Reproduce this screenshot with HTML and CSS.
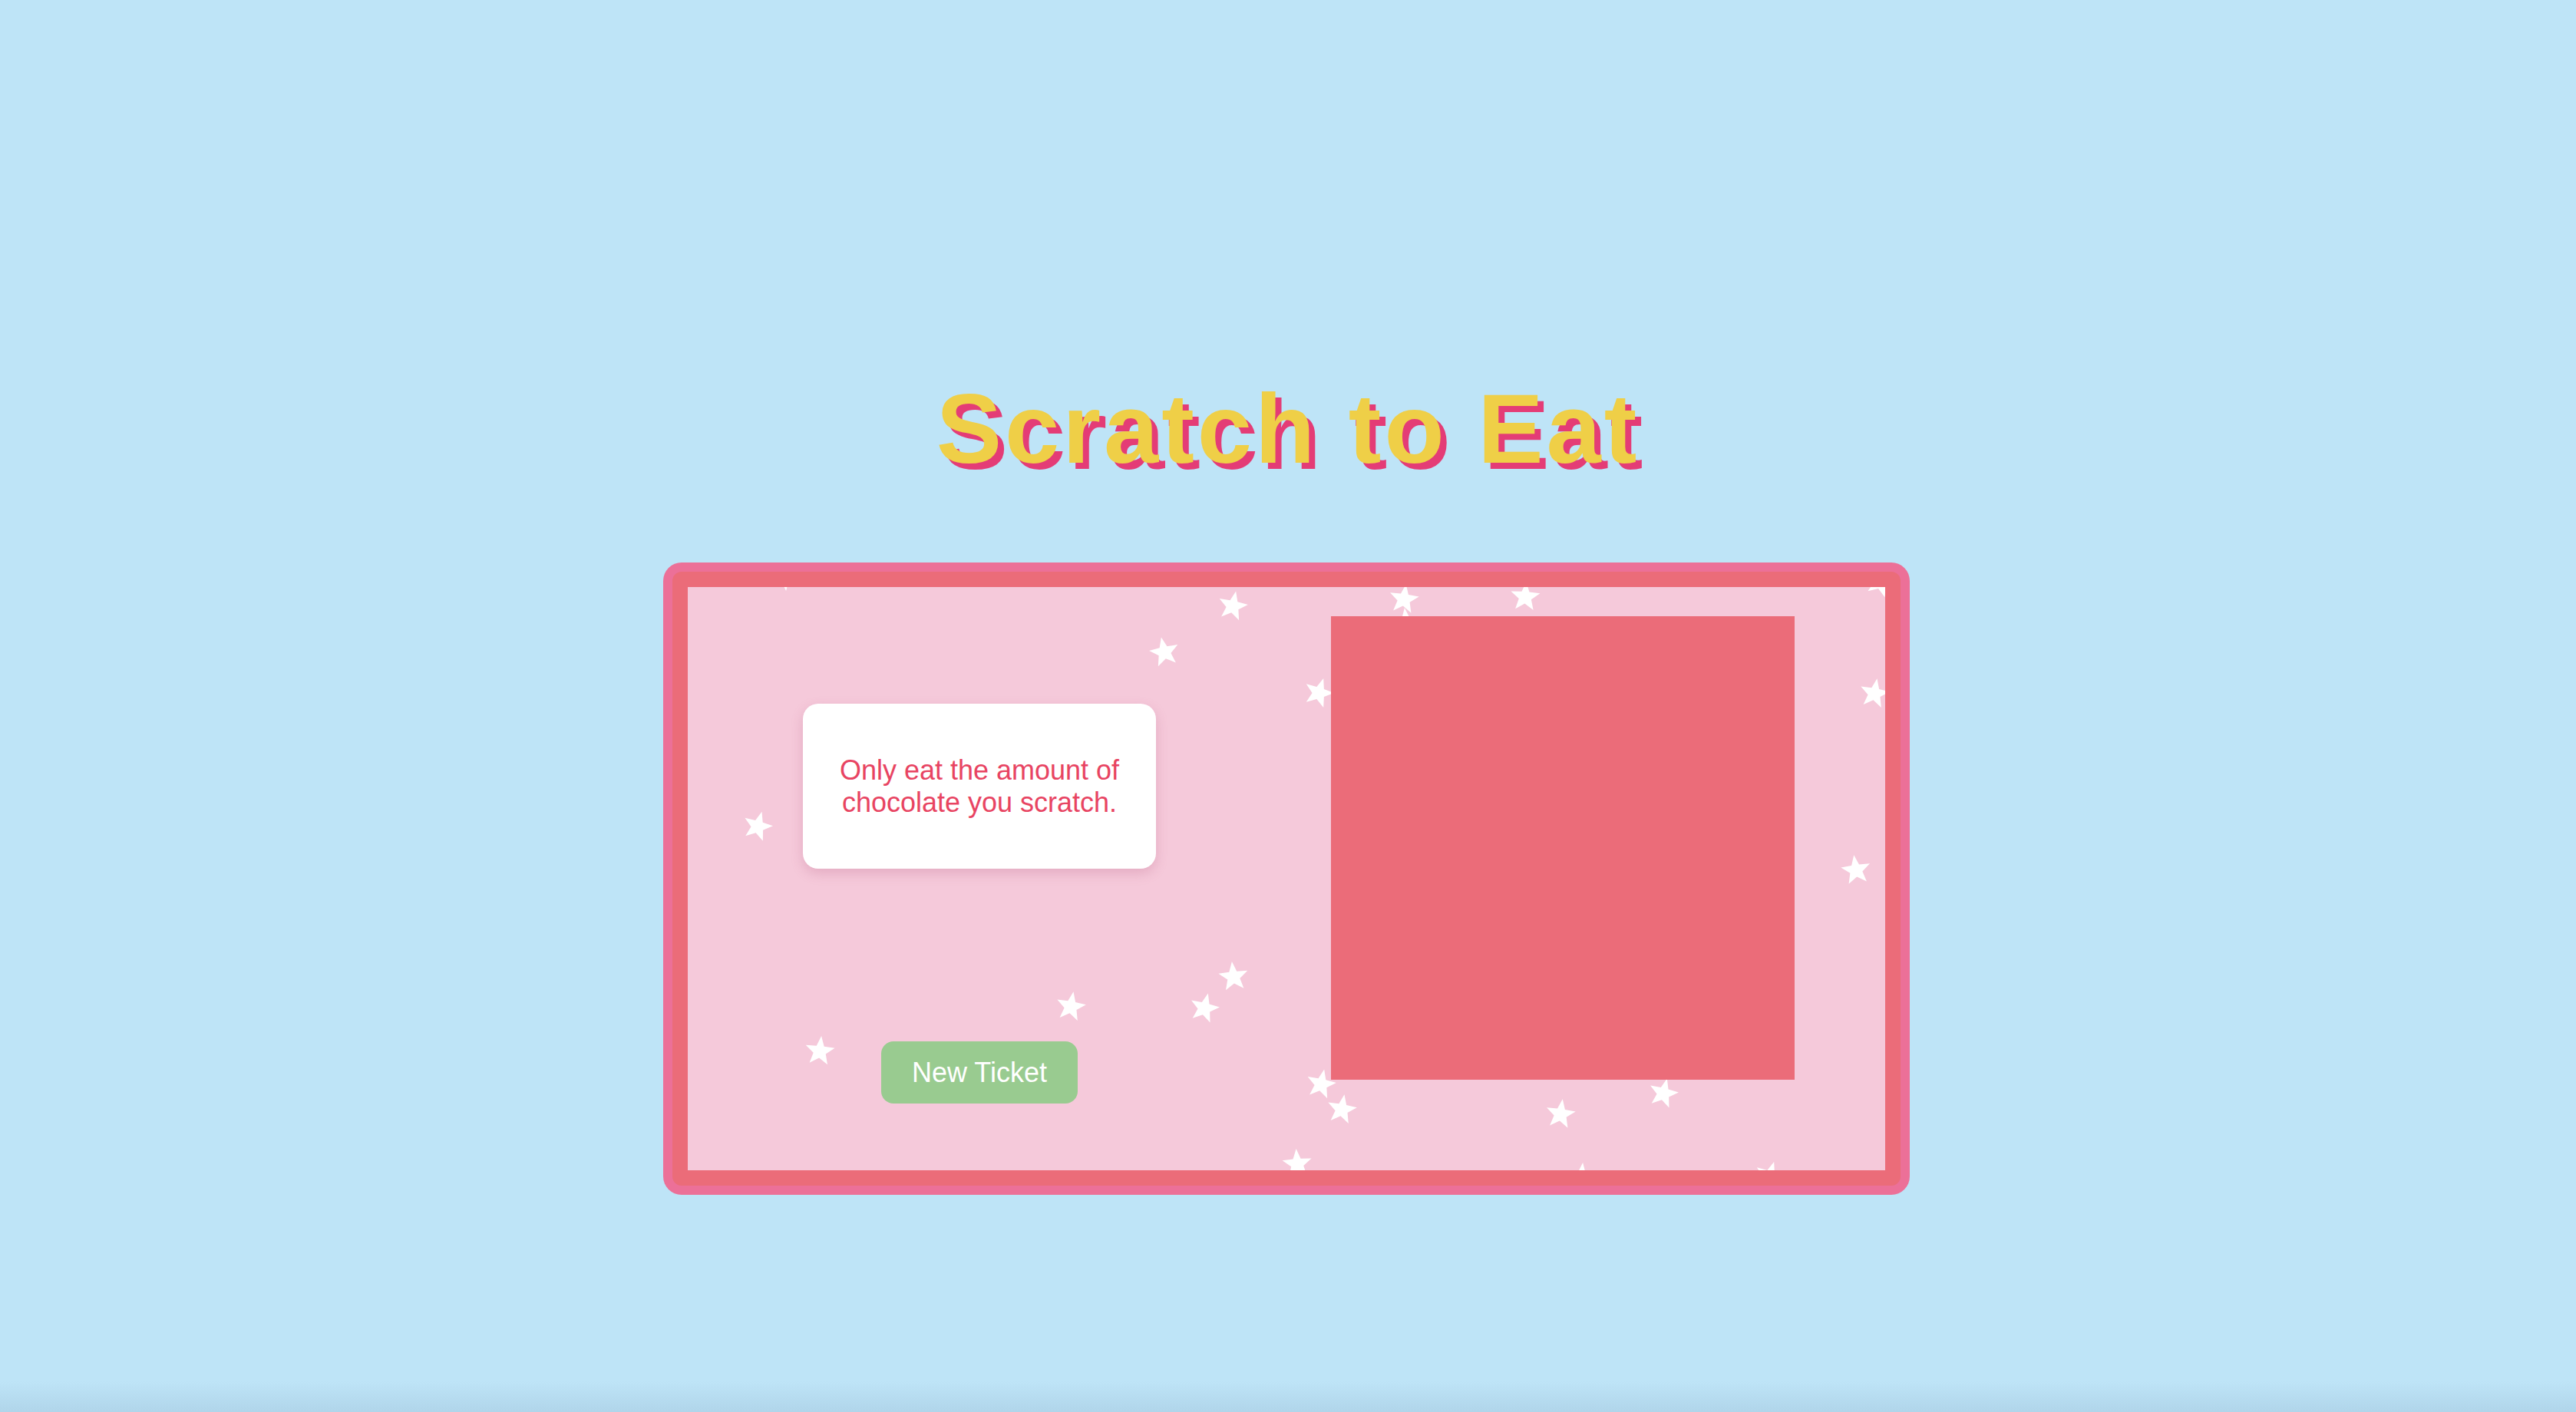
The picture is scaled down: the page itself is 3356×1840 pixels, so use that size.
FILE: index.html
```html
<!DOCTYPE html>
<html lang="en">
<head>
<meta charset="utf-8">
<title>Scratch to Eat</title>
<link rel="stylesheet" href="styles.css">
</head>
<body>
<main class="page">
  <h1 class="title">Scratch to Eat</h1>
  <div class="ticket">
    <div class="ticket-frame">
      <div class="ticket-canvas">
        <svg class="stars" width="1560" height="760" viewBox="0 0 1560 760" aria-hidden="true">
          <defs>
            <polygon id="star" fill="#ffffff" points="0,-20 5,-6.88 19.02,-6.18 8.08,2.63 11.76,16.18 0,8.5 -11.76,16.18 -8.08,2.63 -19.02,-6.18 -5,-6.88"/>
          </defs>
          <use href="#star" transform="translate(126,-15) rotate(30)"/>
          <use href="#star" transform="translate(710,25) rotate(12)"/>
          <use href="#star" transform="translate(621,85) rotate(-12)"/>
          <use href="#star" transform="translate(822,138) rotate(18)"/>
          <use href="#star" transform="translate(933,16) rotate(8)"/>
          <use href="#star" transform="translate(936,47) rotate(-6)"/>
          <use href="#star" transform="translate(1091,13) rotate(4)"/>
          <use href="#star" transform="translate(1554,-6) rotate(20)"/>
          <use href="#star" transform="translate(1546,139) rotate(10)"/>
          <use href="#star" transform="translate(1522,369) rotate(-8)"/>
          <use href="#star" transform="translate(91,312) rotate(16)"/>
          <use href="#star" transform="translate(499,547) rotate(10)"/>
          <use href="#star" transform="translate(711,508) rotate(-6)"/>
          <use href="#star" transform="translate(673,549) rotate(14)"/>
          <use href="#star" transform="translate(172,605) rotate(6)"/>
          <use href="#star" transform="translate(825,648) rotate(12)"/>
          <use href="#star" transform="translate(852,681) rotate(10)"/>
          <use href="#star" transform="translate(1137,687) rotate(8)"/>
          <use href="#star" transform="translate(1271,660) rotate(14)"/>
          <use href="#star" transform="translate(794,752) rotate(-4)"/>
          <use href="#star" transform="translate(1164,770) rotate(6)"/>
          <use href="#star" transform="translate(1409,768) rotate(18)"/>
        </svg>
        <div class="ticket-left">
          <div class="note">
            <p class="note-text">Only eat the amount of<br>chocolate you scratch.</p>
          </div>
          <button class="new-ticket" type="button">New Ticket</button>
        </div>
        <div class="scratch-area"></div>
      </div>
    </div>
  </div>
</main>
</body>
</html>
```

FILE: styles.css
```css
html {
  min-height: 100%;
  background: linear-gradient(to bottom, #bee4f7 0, #bee4f7 calc(100% - 40px), #b0d5ea 100%);
}

body {
  margin: 0;
  min-height: 1840px;
  font-family: "Liberation Sans", Arial, sans-serif;
}

.page {
  display: flex;
  flex-direction: column;
  align-items: center;
  padding-top: 485px;
}

.title {
  margin: 0 0 100px 0;
  font-family: "Liberation Sans", Arial, sans-serif;
  font-weight: 700;
  font-size: 128px;
  line-height: 148px;
  letter-spacing: 4px;
  color: #efcf47;
  text-shadow: 8px 8px 0 #e43c76;
}

.ticket {
  padding: 12px;
  background: #ec7098;
  border-radius: 24px;
  margin-left: -4px;
}

.ticket-frame {
  padding: 20px;
  background: #eb6c79;
  border-radius: 12px;
}

.ticket-canvas {
  position: relative;
  width: 1560px;
  height: 760px;
  background: #f5c9da;
  overflow: hidden;
  display: flex;
}

.stars {
  position: absolute;
  left: 0;
  top: 0;
  z-index: 0;
}

.ticket-left {
  position: relative;
  z-index: 1;
  width: 760px;
  display: flex;
  flex-direction: column;
  align-items: center;
  padding-top: 152px;
  gap: 225px;
}

.note {
  width: 460px;
  height: 215px;
  box-sizing: border-box;
  background: #ffffff;
  border-radius: 20px;
  box-shadow: 0 6px 16px rgba(170, 70, 110, 0.22);
  display: flex;
  align-items: center;
  justify-content: center;
}

.note-text {
  margin: 0;
  font-family: "Liberation Sans", Arial, sans-serif;
  font-size: 36px;
  text-align: center;
  color: #e84462;
}

.new-ticket {
  font-family: "Liberation Sans", Arial, sans-serif;
  font-size: 36px;
  line-height: 41px;
  color: #ffffff;
  background: #99cb90;
  border: none;
  border-radius: 16px;
  padding: 20px 39px;
  width: 256px;
  height: 81px;
  cursor: pointer;
}

.scratch-area {
  position: relative;
  z-index: 1;
  width: 604px;
  height: 604px;
  margin: 38px 0 0 78px;
  background: #eb6c79;
}
```
